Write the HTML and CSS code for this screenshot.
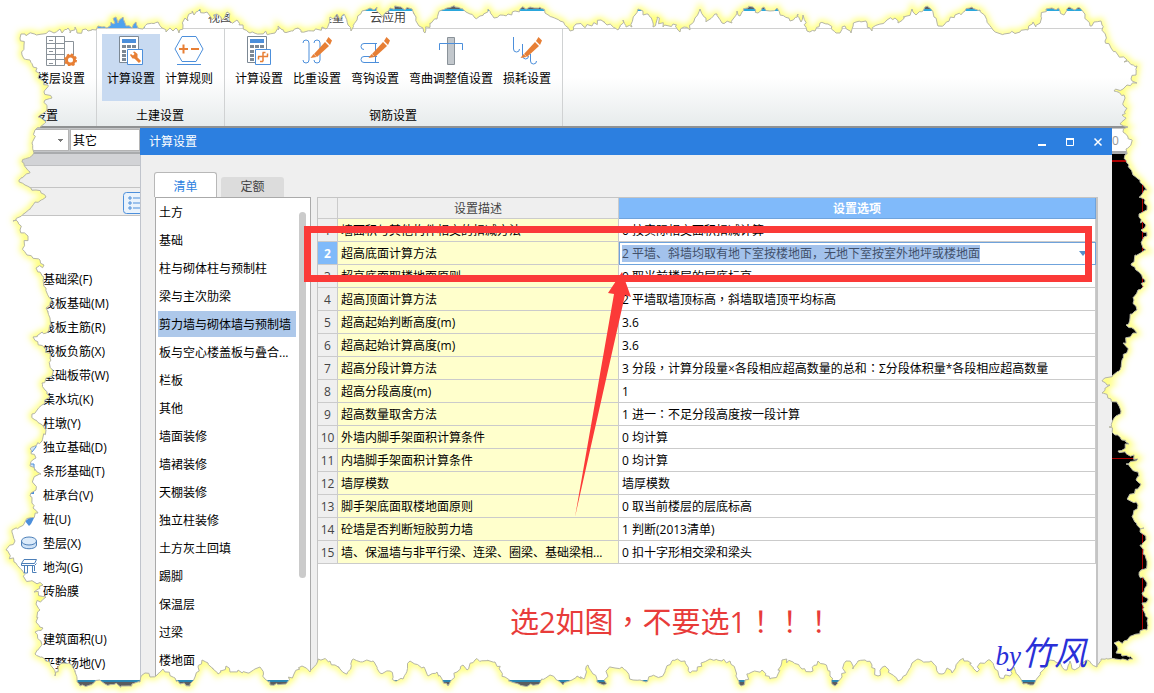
FILE: index.html
```html
<!DOCTYPE html>
<html lang="zh-CN">
<head>
<meta charset="utf-8">
<title>计算设置</title>
<link rel="stylesheet" href="styles.css">
</head>
<body>
<div class="app">
  <div class="caption"></div>
  <nav class="menu">
    <span class="menu-active"></span>
    <a href="#">建模</a><a href="#">视图</a><a href="#">工具</a><a href="#">工程量</a><a href="#">云应用</a>
  </nav>
  <div class="ribbon">
    <section class="group group-first">
      <div class="tools">
        <button class="tool"><svg class="icon" viewBox="0 0 32 30"><g fill="none" stroke="#8a9299"><path d="M1.500 .5h18v29h-18zM10.500 .5v29M1.500 7.500h18M1.500 12.500h18M1.500 18.500h18M1.500 23.500h18M19.500 5.500h9v14M4 4.500h4M4 15.500h4M4 27.500h4"/></g><circle cx="25.500" cy="24" r="4" fill="#fff" stroke="#e77f35" stroke-width="3"/><circle cx="25.500" cy="24" r="5.500" fill="none" stroke="#e77f35" stroke-width="2" stroke-dasharray="2.300 2"/></svg><span>楼层设置</span></button>
      </div>
      <h2>设置</h2>
    </section>
    <section class="group">
      <div class="tools">
        <button class="tool active"><svg class="icon" viewBox="0 0 30 30"><path d="M3.500 .5h19v26h-19z" fill="#fff" stroke="#7c8894"/><path d="M6 3h14v4H6z" fill="#4c8fdb"/><path d="M6 9h4v3H6zm5 0h4v3h-4zm5 0h4v3h-4zM6 14h4v3H6zM6 18h4v3H6zM6 22h4v3H6z" fill="#7c8894"/><path d="M11.500 13.500h15v15h-15z" fill="#fff" stroke="#4c8fdb"/><path d="M18 20l6 6" stroke="#e77f35" stroke-width="3"/><path d="M14 19l1-1 2 1.500 1.500-1.500-1.500-2 1.500-.5 3 2.500v3l-2 1.500h-3z" fill="#e77f35"/></svg><span>计算设置</span></button>
        <button class="tool"><svg class="icon" viewBox="0 0 30 30"><path d="M8 .5h14l7 12.500-7 12.500H8L1 13z" fill="#fff" stroke="#4c8fdb"/><path d="M3 28.500h24" stroke="#4c8fdb"/><path d="M5 13h9M9.500 8.500v9M17 13h8" stroke="#e77f35" stroke-width="2"/></svg><span>计算规则</span></button>
      </div>
      <h2>土建设置</h2>
    </section>
    <section class="group">
      <div class="tools">
        <button class="tool"><svg class="icon" viewBox="0 0 30 30"><path d="M3.500 .5h19v26h-19z" fill="#fff" stroke="#7c8894"/><path d="M6 3h14v4H6z" fill="#4c8fdb"/><path d="M6 9h4v3H6zm5 0h4v3h-4zm5 0h4v3h-4zM6 14h4v3H6zM6 18h4v3H6zM6 22h4v3H6z" fill="#7c8894"/><path d="M11.500 13.500h15v15h-15z" fill="#fff" stroke="#4c8fdb"/><path d="M14 20.500h10M19 16.500v9M18.500 16.500h3M19 25.500h-3M14.500 20.500v3M23.500 20.500v-3" fill="none" stroke="#e77f35" stroke-width="1.500"/></svg><span>计算设置</span></button>
        <button class="tool"><svg class="icon" viewBox="0 0 30 30"><path d="M1 7q0-3 3-3t3 3v17q0 3-3 3t-3-3M12 7q0-3 3-3t3 3v17q0 3-3 3t-3-3" fill="none" stroke="#4c8fdb"/><path d="M12 18L23 6l4 4-12 11z" fill="#e77f35"/><path d="M24 5l2.500-4 3.500 3.500L28 9zM8.500 22l3-4 3 3z" fill="#e77f35"/></svg><span>比重设置</span></button>
        <button class="tool"><svg class="icon" viewBox="0 0 30 30"><path d="M17 7.500H4q-3 0-3 3t3 3M17 20.500H4q-3 0-3 3t3 3h15M15.500 7v19M12 26.500h7" fill="none" stroke="#4c8fdb"/><path d="M12 18L23 6l4 4-12 11z" fill="#e77f35"/><path d="M24 5l2.500-4 3.500 3.500L28 9zM8.500 22l3-4 3 3z" fill="#e77f35"/></svg><span>弯钩设置</span></button>
        <button class="tool"><svg class="icon" viewBox="0 0 30 30"><path d="M11.500 1.500h7v27h-7z" fill="#c2c7cc" stroke="#8a9299"/><path d="M3.500 14V7.500h23V14" fill="none" stroke="#4c8fdb"/></svg><span>弯曲调整值设置</span></button>
        <button class="tool"><svg class="icon" viewBox="0 0 30 30"><path d="M1.500 1v12q0 3 3 3t3-3M10.500 8v11q0 4 3 4t3-3M18.500 18v7q0 3 3 3t3-3" fill="none" stroke="#4c8fdb"/><path d="M12 18L23 6l4 4-12 11z" fill="#e77f35"/><path d="M24 5l2.500-4 3.500 3.500L28 9zM8.500 22l3-4 3 3z" fill="#e77f35"/></svg><span>损耗设置</span></button>
      </div>
      <h2>钢筋设置</h2>
    </section>
  </div>

  <div class="workspace">
    <aside class="side">
      <div class="combos">
        <select class="combo-floor" aria-label="楼层"><option></option></select>
        <select class="combo-kind" aria-label="构件类型"><option>其它</option></select>
      </div>
      <div class="side-head"></div>
      <div class="side-band"></div>
      <div class="side-band side-tools"><button class="view-list" aria-label="列表"><svg viewBox="0 0 20 22"><path d="M20 .5H3.500q-3 0-3 3v15q0 3 3 3H20" fill="#eaf3fc" stroke="#4c8fdb"/><path d="M6 5h2v2H6zM6 10h2v2H6zM6 15h2v2H6zM10 6h10M10 11h10M10 16h10" fill="none" stroke="#4c8fdb"/></svg></button></div>
      <ul class="tree">
        <li>基础梁(F)</li><li>筏板基础(M)</li><li>筏板主筋(R)</li><li>筏板负筋(X)</li><li>基础板带(W)</li><li>集水坑(K)</li><li>柱墩(Y)</li>
        <li><svg viewBox="0 0 18 18"><path d="M9 7l7-4v6l-4 5H9z" fill="#cfe2f6" stroke="#4c8fdb"/></svg>独立基础(D)</li>
        <li><svg viewBox="0 0 18 18"><path d="M7 2h7v8l-5-3z" fill="#cfe2f6" stroke="#4c8fdb"/></svg>条形基础(T)</li>
        <li><svg viewBox="0 0 18 18"><path d="M9 4h5v4H9z" fill="#4c8fdb"/></svg>桩承台(V)</li>
        <li><svg viewBox="0 0 18 18"><path d="M8 1h3v7h3l-3 6-2 2-4-5 3-2z" fill="#4c8fdb"/></svg>桩(U)</li>
        <li><svg viewBox="0 0 18 18"><path d="M1.500 7v4c0 5 15 5 15 0V7" fill="#cfe2f6" stroke="#4c7fb8"/><ellipse cx="9" cy="7" rx="7.500" ry="4" fill="#dcebfa" stroke="#4c7fb8"/></svg>垫层(X)</li>
        <li><svg viewBox="0 0 18 18"><path d="M4 1.500h12.500l-2 4H1.500zM1.500 5.500v2h13l2-2M4.500 8v7h3V8M12.500 8v6.500h4M14.500 8v5" fill="#fff" stroke="#4c7fb8"/></svg>地沟(G)</li>
        <li><svg viewBox="0 0 18 18"><path d="M11 3h3v3h-3z" fill="#4c8fdb"/></svg>砖胎膜</li>
        <li></li><li>建筑面积(U)</li><li>平整场地(V)</li>
      </ul>
    </aside>

    <main class="dialog">
      <header class="dialog-title">
        <h1>计算设置</h1>
        <button aria-label="最小化"><svg viewBox="0 0 10 10"><path d="M1 8h8" stroke="#fff" stroke-width="2"/></svg></button>
        <button aria-label="最大化"><svg viewBox="0 0 10 10"><path d="M1.500 2v6.500h7V2M1 2.500h8" fill="none" stroke="#fff"/><path d="M1 2h8" stroke="#fff" stroke-width="2"/></svg></button>
        <button aria-label="关闭"><svg viewBox="0 0 10 10"><path d="M1.500 1.500l7 7m0-7l-7 7" stroke="#fff" stroke-width="1.500"/></svg></button>
      </header>
      <div class="tabs" role="tablist">
        <button class="tab selected" role="tab">清单</button>
        <button class="tab" role="tab">定额</button>
      </div>
      <div class="panes">
        <div class="category">
          <ul>
            <li>土方</li><li>基础</li><li>柱与砌体柱与预制柱</li><li>梁与主次肋梁</li><li class="current">剪力墙与砌体墙与预制墙</li><li>板与空心楼盖板与叠合...</li><li>栏板</li><li>其他</li><li>墙面装修</li><li>墙裙装修</li><li>天棚装修</li><li>独立柱装修</li><li>土方灰土回填</li><li>踢脚</li><li>保温层</li><li>过梁</li><li>楼地面</li>
          </ul>
          <div class="thumb"></div>
        </div>
        <div class="sheet">
          <table>
            <colgroup><col class="c-no"><col class="c-desc"><col></colgroup>
            <thead><tr><th></th><th>设置描述</th><th class="option">设置选项</th></tr></thead>
            <tbody>
              <tr><th>1</th><td>墙面积与其他构件相交的扣减方法</td><td>0 按实际相交面积扣减计算</td></tr>
              <tr class="editing"><th>2</th><td>超高底面计算方法</td><td><label class="editor"><select aria-label="超高底面计算方法"><option>2 平墙、斜墙均取有地下室按楼地面，无地下室按室外地坪或楼地面</option></select></label></td></tr>
              <tr><th>3</th><td>超高底面取楼地面原则</td><td>0 取当前楼层的层底标高</td></tr>
              <tr><th>4</th><td>超高顶面计算方法</td><td>2 平墙取墙顶标高<span class="mark" lang="zh-TW">，</span>斜墙取墙顶平均标高</td></tr>
              <tr><th>5</th><td>超高起始判断高度(m)</td><td>3.6</td></tr>
              <tr><th>6</th><td>超高起始计算高度(m)</td><td>3.6</td></tr>
              <tr><th>7</th><td>超高分段计算方法</td><td>3 分段<span class="mark" lang="zh-TW">，</span>计算分段量×各段相应超高数量的总和<span class="mark" lang="zh-TW">：</span>Σ分段体积量*各段相应超高数量</td></tr>
              <tr><th>8</th><td>超高分段高度(m)</td><td>1</td></tr>
              <tr><th>9</th><td>超高数量取舍方法</td><td>1 进一<span class="mark" lang="zh-TW">：</span>不足分段高度按一段计算</td></tr>
              <tr><th>10</th><td>外墙内脚手架面积计算条件</td><td>0 均计算</td></tr>
              <tr><th>11</th><td>内墙脚手架面积计算条件</td><td>0 均计算</td></tr>
              <tr><th>12</th><td>墙厚模数</td><td>墙厚模数</td></tr>
              <tr><th>13</th><td>脚手架底面取楼地面原则</td><td>0 取当前楼层的层底标高</td></tr>
              <tr><th>14</th><td>砼墙是否判断短胶剪力墙</td><td>1 判断(2013清单)</td></tr>
              <tr><th>15</th><td>墙、保温墙与非平行梁、连梁、圈梁、基础梁相...</td><td>0 扣十字形相交梁和梁头</td></tr>
            </tbody>
          </table>
          <div class="callout"></div>
          <svg class="arrow" viewBox="0 0 70 250"><path d="M0 248L39 25l-6-1L47 3l9 25-6-2z" fill="#fb3a38"/></svg>
          <p class="note">选2如图<span class="mark" lang="zh-TW">，</span>不要选1<span class="mark" lang="zh-TW">！！！</span></p>
        </div>
      </div>
    </main>

    <div class="canvas">
      <div class="canvas-bar">0</div>
      <div class="view"><i class="axis-top"></i><i class="axis-mid"></i><i class="axis-v"></i></div>
    </div>
  </div>
  <div class="taskbar"></div>
</div>

<svg class="torn" viewBox="0 0 1154 693" preserveAspectRatio="none" aria-hidden="true">
  <defs>
    <filter id="soft" x="-5%" y="-5%" width="110%" height="110%"><feGaussianBlur stdDeviation="3"/></filter>
    <clipPath id="outside"><path id="cut" clip-rule="evenodd"/></clipPath>
  </defs>
  <g clip-path="url(#outside)">
    <rect width="1154" height="693" fill="#fff"/>
    <path id="glow" fill="none" stroke="#ffff66" stroke-width="5" filter="url(#soft)"/>
  </g>
  <path id="edge" fill="none" stroke="#b5b5a6"/>
</svg>
<p class="signature"><span>by</span>竹风</p>
<script src="edge.js"></script>
</body>
</html>
```

FILE: styles.css
```css
* { box-sizing: border-box; }

body {
  margin: 0;
  background: #fff;
  color: #000;
  font: 12px/16px "Open Sans", "Noto Sans CJK SC", sans-serif;
  overflow: hidden;
}

button, select { font: inherit; color: inherit; }
button { border: 0; background: none; padding: 0; }
ul { list-style: none; margin: 0; padding: 0; }
h1, h2, p { margin: 0; font-size: 12px; font-weight: 400; }
.mark { font-family: "Noto Sans CJK TC", sans-serif; line-height: 1; }

.app {
  display: flex;
  flex-direction: column;
  height: 100vh;
  position: relative;
}

.caption { height: 11px; flex: none; background: #5e6062; border-bottom: 2px solid #2aa7dc; }

.menu {
  display: flex;
  align-items: stretch;
  gap: 26px;
  flex: none;
  height: 18px;
  padding-left: 97px;
  line-height: 14px;
  border-bottom: 1px solid #d0d0d0;
}
.menu a { color: #444; text-decoration: none; }
.menu-active { width: 48px; margin-right: -13px; background: #4fa2ee; }

.ribbon {
  display: flex;
  flex: none;
  height: 99px;
  border-bottom: 2px solid #8f9192;
  background: linear-gradient(#fff 50%, #e7ebec);
}
.group {
  display: flex;
  flex-direction: column;
  justify-content: space-between;
  padding: 5px 6px 2px 5px;
  border-right: 1px solid #d0d2d3;
}
.group h2 { text-align: center; }
.group-first { width: 97px; padding-left: 32px; }
.group-first h2 { text-align: left; padding-left: 2px; }
.tools { display: flex; }
.tool {
  display: flex;
  flex-direction: column;
  align-items: center;
  gap: 5px;
  height: 67px;
  padding: 2px 5px;
  white-space: nowrap;
}
.tool.active { background: #c8daf1; }
.icon { width: 30px; height: 30px; }
.group-first .icon { width: 32px; }

.workspace {
  display: grid;
  grid-template-columns: 140px minmax(0, 1fr) 42px;
  flex: 1;
  min-height: 0;
}

.side { display: flex; flex-direction: column; overflow: hidden; }
.combos { display: flex; height: 26px; flex: none; padding: 1px 0; border-bottom: 2px solid #a9abad; background: #c3c5c7; gap: 1px; }
.combos select {
  appearance: none;
  border: 1px solid #b4b4b4;
  border-radius: 0;
  background: #fff;
  padding: 1px 2px 0;
  line-height: 20px;
}
.combo-floor { width: 69px; background: linear-gradient(#777, #777) 57px 9px / 5px 1px no-repeat, linear-gradient(#777, #777) 58px 10px / 3px 1px no-repeat, linear-gradient(#777, #777) 59px 11px / 1px 1px no-repeat, #fff !important; }
.combo-kind { flex: 1; }
.side-head { height: 12px; flex: none; background: #d2d3d6; border-bottom: 1px solid #bfc0c2; }
.side-band { height: 22px; flex: none; background: #efefef; border-bottom: 1px solid #c4c4c4; }
.side-tools { height: 28px; display: flex; justify-content: flex-end; padding-top: 3px; }
.view-list { overflow: hidden; width: 17px; }
.view-list svg { display: block; width: 20px; height: 22px; }
.tree { padding-top: 52px; }
.tree li { position: relative; height: 24px; line-height: 24px; padding-left: 43px; white-space: nowrap; }
.tree svg { position: absolute; left: 20px; top: 2px; width: 18px; height: 18px; }

.dialog {
  display: flex;
  flex-direction: column;
  min-height: 0;
  background: #efefef;
  border-left: 1px solid #c0c4cc;
}
.dialog-title {
  display: flex;
  align-items: center;
  gap: 18px;
  flex: none;
  height: 27px;
  margin-left: -1px;
  padding: 0 9px;
  background: #2c7fe0;
  color: #fff;
}
.dialog-title h1 { margin-right: auto; }
.dialog-title svg { display: block; width: 10px; height: 10px; }

.tabs { display: flex; align-items: flex-end; gap: 4px; height: 42px; padding-left: 13px; flex: none; }
.tab { width: 63px; height: 20px; border-radius: 3px 3px 0 0; background: #dcdcdc; color: #444; }
.tab.selected { height: 25px; padding-top: 3px; background: #fff; border: 1px solid #b8b8b8; border-bottom: 0; color: #2c7fe0; }

.panes { display: flex; gap: 6px; flex: 1; min-height: 0; padding: 0 14px; }
.category {
  display: flex;
  justify-content: space-between;
  width: 156px;
  flex: none;
  overflow: hidden;
  background: #fff;
  border: 1px solid #aaa;
  border-bottom: 0;
}
.category ul { width: 140px; padding: 1px 0 0 2px; }
.category li { height: 26px; margin-bottom: 2px; padding-left: 1px; line-height: 28px; white-space: nowrap; }
.category .current { background: #adc8ea; }
.thumb { width: 7px; height: 366px; margin: 14px 4px 0 0; border-radius: 4px; background: #cbcbcb; }

.sheet { position: relative; flex: 1; min-width: 0; background: #fff; border: solid #c4c4c4; border-width: 1px 2px 0 1px; }
table { width: 100%; table-layout: fixed; border-collapse: separate; border-spacing: 0; }
.c-no { width: 20px; }
.c-desc { width: 281px; }
tr { height: 23px; }
thead tr { height: 21px; }
th, td { padding: 1px 0 0; font-weight: 400; border: solid #cbcbcb; border-width: 0 1px 1px 0; white-space: nowrap; overflow: hidden; }
th { background: #efefef; color: #444; text-align: center; }
td { padding-left: 3px; }
tbody td:nth-child(2) { background: #ffffcc; }
th.option { background: #80bafa; border-color: #6fa3dc; color: #fff; font-weight: 700; }
.editing th { background: #80bafa; color: #fff; font-weight: 700; }
.editing td:last-child { padding: 0; border: 0; }
.editor {
  display: flex;
  height: 23px;
  align-items: center;
  padding-left: 2px;
  border: 1px solid #6fa3dc;
}
.editor select { appearance: none; border: 0; border-radius: 0; padding: 0; height: 17px; line-height: 17px; background: #a3c2ec; color: #41506a; }
.editor::after { content: ""; margin: 0 8px 0 auto; border: 4px solid transparent; border-top: 5px solid #5590cc; border-bottom: 0; }

.callout { position: absolute; left: -14px; right: 4px; top: 28px; height: 56px; border: 7px solid #fb3a38; }
.arrow { position: absolute; left: 257px; top: 71px; width: 70px; height: 250px; }
.note { position: absolute; left: 192px; top: 404px; font-size: 29px; line-height: 40px; color: #e83c3a; white-space: nowrap; }

.canvas { display: flex; flex-direction: column; }
.canvas-bar { height: 26px; color: #999; line-height: 24px; border-bottom: 3px solid #a9abad; border-top: 1px solid #c3c5c7; background: #fff; }
.view { position: relative; flex: 1; background: #000; }
.view i { position: absolute; background: #a00; }
.axis-top { left: 0; top: 6px; width: 20px; height: 2px; }
.axis-mid { left: 0; top: 304px; width: 28px; height: 1px; }
.axis-v { left: 30px; top: 0; width: 1px; height: 480px; }

.taskbar { flex: none; height: 13px; border-top: 2px solid #2a86b0; background: #5a5c5e; }

.torn { position: absolute; inset: 0; width: 100%; height: 100%; pointer-events: none; }
.signature {
  position: absolute;
  right: 67px;
  bottom: 17px;
  font: italic 33px/40px "Liberation Serif", "Noto Sans CJK SC", serif;
  color: #2a30d8;
  white-space: nowrap;
}
.signature span { font-size: 27px; }
```

FILE: edge.js
```js
// Outline of the torn paper, clockwise from the top left corner.
const outline = [
  "21,34 25,34 43,34 50,31 54,33 60,29 62,33 68,28 70,33 75,27 77,33 86,29 88,31 96,30 98,26 102,27 107,28 111,22 113,24 116,17 118,23 123,17 126,26 132,28 136,22 138,28 143,29 147,24 158,22 162,28 166,32 170,28 173,31 176,28 179,33 183,25 185,18 188,21 192,11 194,15 200,9 204,13 207,12 212,20 217,14 222,20 227,12 232,23 237,20 243,25 248,32",
  "250,33 275,33 278,26 284,32 293,31 298,28 301,32 314,31 322,27 326,29 330,17 333,19 337,14 340,20 344,14 348,25 351,31 357,20 362,11 366,10 370,8 374,10 377,7 381,18 385,13 390,8 400,7 405,10 412,9 416,17 419,26 425,33 430,23 437,19 442,10 447,8 455,7 462,9 466,12 470,14 475,18 480,16 488,9 494,18 500,15 508,14 515,11 520,9 530,7 540,7 545,13 552,17 560,21",
  "570,31 576,24 583,26 592,26 601,20 607,25 615,28 618,30 623,20 626,27 632,27 635,15 638,9 643,15 648,14 653,27 657,17 663,27 673,24 680,32 684,27 690,30 695,18 700,9 706,22 717,14 722,23 732,23 737,11 740,16 743,9 748,8 753,7 758,13 764,7 770,11 777,8 780,15 790,21 798,14 801,22 803,15 807,31 815,31 820,23 828,24 836,33 840,33 845,26 851,33 856,22 866,21",
  "872,31 877,25 887,20 895,18 898,23 907,16 912,9 916,15 925,7 931,9 934,17 938,26 944,25 955,15 965,11 972,7 980,10 986,18 993,30 998,33 1020,32 1028,30 1033,22 1036,27 1041,17 1046,9 1052,8 1060,11 1064,15 1069,7 1075,10 1080,8 1085,14 1090,26 1094,22 1101,21",
  "1102,25 1105,41 1111,48 1118,55 1127,60 1124,62 1137,66 1136,75 1131,79 1137,83 1125,87 1114,91 1124,95 1123,105 1127,108 1122,115 1126,118 1120,124 1128,127 1123,132 1128,137 1132,140 1126,149 1125,155 1129,165 1133,175 1140,180 1147,190 1139,197 1145,200 1147,210 1139,217 1146,225 1141,230 1147,236 1141,243 1146,250 1135,255 1131,264 1139,272 1145,282 1138,290 1134,300 1137,310 1130,318 1126,325 1137,333 1123,343 1128,350 1122,360 1120,370 1112,377 1102,381 1110,385 1105,388 1102,393 1111,399 1121,411 1113,420 1109,427 1115,435 1129,444 1118,451 1138,459 1126,464 1138,472 1136,480 1141,484 1127,499 1138,505 1133,515 1137,525 1144,528 1140,532 1146,540 1140,545 1145,555 1147,565 1139,575 1147,583 1142,593 1148,600 1142,603 1148,618 1147,630 1137,634 1124,641 1114,643 1118,649 1116,653 1122,656 1133,659 1101,659",
  "1097,667 1087,660 1084,662 1075,670 1070,661 1067,670 1058,663 1050,660 1045,668 1040,673 1036,680 1030,685 1023,684 1018,675 1014,667 1010,676 1005,675 1000,678 995,669 990,660 980,663 977,672 968,661 960,660 952,673 947,668 942,674 933,663 925,662 918,659 912,663 906,675 898,681 894,676 885,666 878,676 872,665 865,660 858,661 853,669",
  "851,662 846,661 842,677 835,686 830,676 824,664 818,661 813,671 802,669 793,662 782,660 778,674 770,679 762,670 752,672 745,680 741,686 736,675 730,661 722,661 710,659 704,662 697,671 690,673 685,661 673,660 665,672 660,677 652,676 646,682 640,680 633,680 628,673 622,667 615,668 608,669 604,685 597,682 593,674 588,665 584,679 577,676 572,680 563,685 555,678",
  "550,675 540,683 528,686 515,683 505,677 495,662 475,660 467,670 463,665 457,672 448,686 442,679 437,672 428,676 424,667 415,664 410,661 403,679 395,681 390,671 380,673 373,661 352,660 347,674 335,665 330,661 318,659 310,672 302,666 294,674 286,684 270,685 265,679 260,667 248,673 238,670 230,672 226,666 218,674 208,663 202,660 195,677 190,686 180,684 175,678 163,669 157,675 150,677 145,673 140,682 125,686 105,684 100,680 90,685 80,686 77,678 72,665 63,663 58,667 55,676 50,662 42,657 35,654",
  "42,645 35,632 43,628 36,622 40,610 36,604 46,597 34,592 43,585 25,579 22,570 14,562 6,550 15,541 12,530 25,522 38,513 33,508 30,496 36,490 33,480 41,474 30,466 36,458 30,449 42,441 46,430 35,420 32,414 42,405 50,397 45,390 42,383 52,376 51,360 46,350 33,337 49,330 50,318 46,308 52,300 46,288 40,272 36,268 44,265 40,260 27,255 23,248 28,236 20,230 18,222 13,221 25,213",
  "46,197 36,190 25,185 19,180 30,172 22,162 34,153 32,143 35,130 46,122 38,117 47,110 45,100 52,98 44,92 48,85 38,78 37,68 30,60 22,55 24,45 20,38"
].join(" ").split(" ").map(p => p.split(",").map(Number));

let seed = 7;
const jitter = () => {
  seed = (seed * 16807) % 2147483647;
  return (seed / 2147483647 - 0.5) * 4;
};

const points = [];
outline.forEach(([x, y], i) => {
  const [nx, ny] = outline[(i + 1) % outline.length];
  const steps = Math.max(1, Math.round(Math.hypot(nx - x, ny - y) / 3));
  points.push([x, y]);
  for (let s = 1; s < steps; s++) {
    points.push([x + (nx - x) * s / steps + jitter(), y + (ny - y) * s / steps + jitter()]);
  }
});

const d = "M" + points.map(p => p.map(n => n.toFixed(1)).join(" ")).join("L") + "Z";
document.getElementById("edge").setAttribute("d", d);
document.getElementById("glow").setAttribute("d", d);
document.getElementById("cut").setAttribute("d", "M0 0H1154V693H0Z" + d);
```
